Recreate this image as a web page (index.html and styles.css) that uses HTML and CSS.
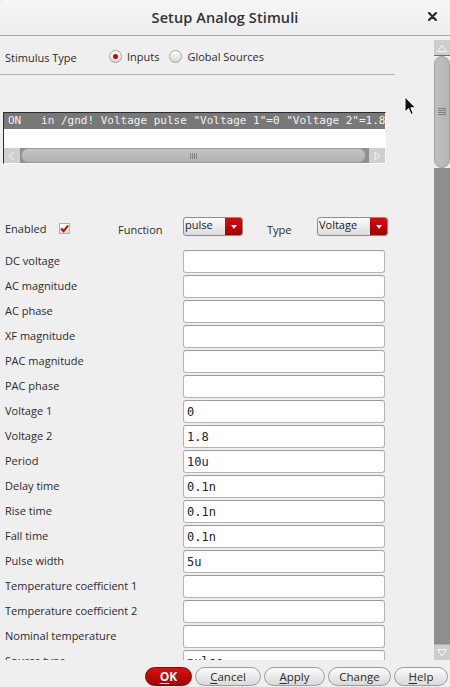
FILE: index.html
```
<!DOCTYPE html>
<html>
<head>
<meta charset="utf-8">
<link rel="stylesheet" href="styles.css">
</head>
<body>
<div class="window">
  <div class="titlebar">
    <span class="title">Setup Analog Stimuli</span>
    <span class="close"><svg width="9" height="9" viewBox="0 0 9 9"><path d="M1 1 L8 8 M8 1 L1 8" stroke="#2a2a2a" stroke-width="2.2" stroke-linecap="round"/></svg></span>
  </div>
  <div class="main">
    <div class="content">
      <div class="stimrow">
        <span class="stimlabel">Stimulus Type</span>
        <span class="radio checked"></span><span class="rlabel">Inputs</span>
        <span class="radio"></span><span class="rlabel">Global Sources</span>
      </div>
      <div class="sep"></div>
      <div class="listbox">
        <div class="selrow">ON   in /gnd! Voltage pulse "Voltage 1"=0 "Voltage 2"=1.8</div>
        <div class="blank"></div>
        <div class="hscroll">
          <div class="harrow"><svg width="10" height="10" viewBox="0 0 10 10"><path d="M7 1 L2 5 L7 9" fill="none" stroke="#f4f4f4" stroke-width="1"/></svg></div>
          <div class="hthumb"><span class="hgrip"></span></div>
          <div class="hgap"></div>
          <div class="harrow right"><svg width="10" height="10" viewBox="0 0 10 10"><path d="M3 1 L8 5 L3 9 Z" fill="none" stroke="#f4f4f4" stroke-width="1"/></svg></div>
        </div>
      </div>
      <div class="enrow">
        <span class="lbl en">Enabled</span>
        <span class="check"><svg width="9" height="9" viewBox="0 0 9 9"><path d="M1.2 4.5 L3.6 7.2 L8 1.5" fill="none" stroke="#d10000" stroke-width="2"/></svg></span>
        <span class="lbl fn">Function</span>
        <span class="combo w60"><span class="ctext">pulse</span><span class="cbtn"><span class="tri"></span></span></span>
        <span class="lbl ty">Type</span>
        <span class="combo w71"><span class="ctext">Voltage</span><span class="cbtn"><span class="tri"></span></span></span>
      </div>
      <div class="form">
        <div class="row"><span class="flabel">DC voltage</span><span class="field"></span></div>
        <div class="row"><span class="flabel">AC magnitude</span><span class="field"></span></div>
        <div class="row"><span class="flabel">AC phase</span><span class="field"></span></div>
        <div class="row"><span class="flabel">XF magnitude</span><span class="field"></span></div>
        <div class="row"><span class="flabel">PAC magnitude</span><span class="field"></span></div>
        <div class="row"><span class="flabel">PAC phase</span><span class="field"></span></div>
        <div class="row"><span class="flabel">Voltage 1</span><span class="field">0</span></div>
        <div class="row"><span class="flabel">Voltage 2</span><span class="field">1.8</span></div>
        <div class="row"><span class="flabel">Period</span><span class="field">10u</span></div>
        <div class="row"><span class="flabel">Delay time</span><span class="field">0.1n</span></div>
        <div class="row"><span class="flabel">Rise time</span><span class="field">0.1n</span></div>
        <div class="row"><span class="flabel">Fall time</span><span class="field">0.1n</span></div>
        <div class="row"><span class="flabel">Pulse width</span><span class="field">5u</span></div>
        <div class="row"><span class="flabel">Temperature coefficient 1</span><span class="field"></span></div>
        <div class="row"><span class="flabel">Temperature coefficient 2</span><span class="field"></span></div>
        <div class="row"><span class="flabel">Nominal temperature</span><span class="field"></span></div>
        <div class="row"><span class="flabel">Source type</span><span class="field">pulse</span></div>
      </div>
    </div>
    <div class="vscroll">
      <div class="varrow"><svg width="12" height="10" viewBox="0 0 12 10"><path d="M1.5 8.5 L6 2 L10.5 8.5 Z" fill="none" stroke="#f6f6f6" stroke-width="1"/></svg></div>
      <div class="vthumb"><span class="vgrip"></span></div>
      <div class="vtrack"></div>
      <div class="varrow down"><svg width="12" height="10" viewBox="0 0 12 10"><path d="M1.5 1.5 L6 8 L10.5 1.5 Z" fill="none" stroke="#f6f6f6" stroke-width="1"/></svg></div>
    </div>
  </div>
  <div class="buttons">
    <span class="btn ok"><u>O</u>K</span>
    <span class="btn b-cancel"><u>C</u>ancel</span>
    <span class="btn b-apply"><u>A</u>pply</span>
    <span class="btn b-change">Change</span>
    <span class="btn b-help"><u>H</u>elp</span>
  </div>
  <svg class="cursor" width="13" height="20" viewBox="0 0 13 20"><path d="M1 1 L1 16 L4.5 12.5 L7 18.5 L9.3 17.5 L6.8 11.8 L11.5 11.8 Z" fill="#111" stroke="#fff" stroke-width="1"/></svg>
</div>
</body>
</html>
```
FILE: styles.css
```
html, body {
  margin: 0;
  padding: 0;
}
body {
  width: 450px;
  height: 687px;
  overflow: hidden;
  background: #efefef;
  font-family: "Open Sans", "Noto Sans", sans-serif;
  font-size: 11px;
  color: #2b2b2b;
}
.window {
  position: relative;
  width: 450px;
  height: 687px;
  background: #efefef;
}
.titlebar {
  height: 35px;
  border-bottom: 1px solid #a6a6a6;
  background: linear-gradient(#f6f6f6, #ededed);
  border-radius: 6px 6px 0 0;
  display: grid;
  grid-template-columns: 1fr auto 1fr;
  align-items: center;
}
.title {
  grid-column: 2;
  font-size: 14.5px;
  font-weight: 600;
  color: #333;
  letter-spacing: 0.1px;
}
.close {
  grid-column: 3;
  justify-self: end;
  margin-right: 13px;
  display: flex;
  margin-top: -2px;
}
.main {
  display: flex;
  height: 624px;
}
.content {
  flex: 1;
  overflow: hidden;
}
.stimrow {
  margin-top: 11px;
  height: 20px;
  display: flex;
  align-items: center;
  padding-left: 5px;
}
.stimlabel {
  width: 104px;
  margin-top: 1px;
}
.radio {
  width: 11px;
  height: 11px;
  border: 1px solid #a4a4a4;
  border-radius: 50%;
  background: linear-gradient(#fdfdfd, #d8d8d8);
  display: flex;
  align-items: center;
  justify-content: center;
  margin-top: -1px;
}
.radio.checked::after {
  content: "";
  width: 5px;
  height: 5px;
  border-radius: 50%;
  background: #d30000;
}
.rlabel {
  margin-left: 5px;
  margin-right: 10px;
  margin-top: -2px;
}
.sep {
  margin-top: 7px;
  width: 395px;
  height: 1px;
  background: #b3b3b3;
}
.listbox {
  margin-top: 37px;
  margin-left: 3px;
  width: 381px;
  border-top: 1px solid #2c2c2c;
  border-left: 1px solid #2c2c2c;
  border-right: 1px solid #fafafa;
  border-bottom: 1px solid #fafafa;
  background: #fff;
}
.selrow {
  height: 16px;
  background: #787878;
  color: #f2f2f2;
  font-family: "DejaVu Sans Mono", monospace;
  font-size: 11px;
  line-height: 16px;
  white-space: pre;
  overflow: hidden;
  padding-left: 4px;
}
.blank {
  height: 19px;
}
.hscroll {
  height: 15px;
  display: flex;
  background: #909090;
}
.harrow {
  width: 16px;
  background: #cfcfcf;
  display: flex;
  align-items: center;
  justify-content: center;
}
.hthumb {
  width: 345px;
  margin-left: 1px;
  background: linear-gradient(#c4c4c4, #b2b2b2);
  border: 1px solid #9c9c9c;
  border-radius: 8px;
  box-sizing: border-box;
  display: flex;
  align-items: center;
  justify-content: center;
}
.hgrip {
  width: 7px;
  height: 6px;
  background: repeating-linear-gradient(90deg, #808080 0 1px, transparent 1px 2px);
}
.hgap {
  flex: 1;
}
.enrow {
  margin-top: 53px;
  height: 19px;
  display: flex;
  align-items: flex-start;
  padding-left: 5px;
}
.lbl {
  margin-top: 5px;
  line-height: 15px;
}
.lbl.en { width: 54px; margin-top: 4px; }
.lbl.fn { width: 65px; margin-left: 48px; }
.lbl.ty { width: 50px; margin-left: 24px; }
.check {
  width: 11px;
  height: 11px;
  margin-top: 6px;
  box-sizing: border-box;
  border: 1px solid #b0b0b0;
  background: linear-gradient(#fdfdfd, #dadada);
  display: flex;
  align-items: center;
  justify-content: center;
}
.combo {
  height: 19px;
  box-sizing: border-box;
  border: 1px solid #8c8c8c;
  border-radius: 3px;
  background: linear-gradient(#fcfcfc, #dcdcdc);
  display: flex;
  overflow: hidden;
}
.combo.w60 { width: 60px; }
.combo.w71 { width: 71px; }
.ctext {
  flex: 1;
  padding-left: 1px;
  line-height: 14px;
  color: #222;
}
.cbtn {
  width: 17px;
  background: linear-gradient(#d80a0a, #a30000);
  display: flex;
  align-items: center;
  justify-content: center;
}
.tri {
  width: 0;
  height: 0;
  border-left: 3.5px solid transparent;
  border-right: 3.5px solid transparent;
  border-top: 4px solid #fff;
}
.form {
  margin-top: 14px;
}
.row {
  height: 25px;
  display: flex;
  align-items: flex-start;
}
.flabel {
  width: 178px;
  padding-left: 5px;
  height: 23px;
  line-height: 21px;
}
.field {
  width: 202px;
  height: 23px;
  box-sizing: border-box;
  border: 1px solid #b4b4b4;
  border-top-color: #9c9c9c;
  border-radius: 3px;
  background: #fff;
  font-family: "DejaVu Sans Mono", monospace;
  font-size: 12px;
  line-height: 22px;
  padding-left: 3px;
  color: #222;
}
.vscroll {
  width: 16px;
  padding-top: 4px;
  display: flex;
  flex-direction: column;
}
.varrow {
  height: 15px;
  background: #cdcdcd;
  border-bottom: 1px solid #6d6d6d;
  display: flex;
  align-items: center;
  justify-content: center;
}
.varrow.down {
  border-bottom: none;
  border-top: 1px solid #b0b0b0;
}
.vthumb {
  height: 112px;
  box-sizing: border-box;
  background: linear-gradient(90deg, #c0c0c0, #b4b4b4);
  border: 1px solid #a0a0a0;
  border-radius: 8px;
  display: flex;
  align-items: center;
  justify-content: center;
}
.vgrip {
  width: 8px;
  height: 8px;
  background: repeating-linear-gradient(180deg, #7e7e7e 0 1px, transparent 1px 2px);
}
.vtrack {
  flex: 1;
  background: #8e8e8e;
}
.buttons {
  height: 27px;
  box-sizing: border-box;
  padding-top: 7px;
  padding-right: 2px;
  display: flex;
  justify-content: flex-end;
  gap: 3px;
}
.btn {
  height: 19px;
  box-sizing: border-box;
  border: 1px solid #9b9b9b;
  border-radius: 10px;
  background: linear-gradient(#fbfbfb, #d9d9d9);
  display: flex;
  align-items: center;
  justify-content: center;
  font-size: 11.5px;
  color: #2a2a2a;
}
.btn u {
  text-underline-offset: 2px;
}
.btn.ok {
  width: 47px;
  background: linear-gradient(#dc1010, #a40000);
  border-color: #8a0000;
  color: #fff;
  font-weight: 700;
  font-size: 12px;
}
.b-cancel { width: 66px; }
.b-apply { width: 61px; }
.b-change { width: 63px; }
.b-help { width: 54px; }
.cursor {
  position: absolute;
  left: 404px;
  top: 96px;
}
```
